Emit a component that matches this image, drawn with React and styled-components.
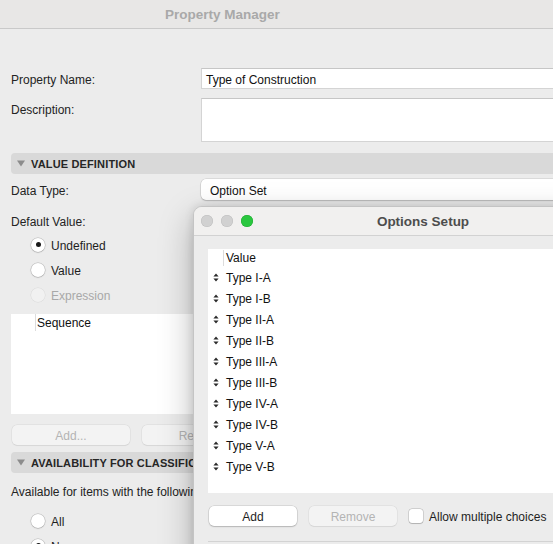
import React from 'react';
import styled, { createGlobalStyle } from 'styled-components';

const Global = createGlobalStyle`
  html, body { margin: 0; padding: 0; width: 553px; height: 544px; overflow: hidden; background: #ececec; }
  body { font-family: "Liberation Sans", Arial, sans-serif; font-size: 12px; color: #232323; }
  * { box-sizing: border-box; }
`;

const Screen = styled.div`
  position: relative;
  width: 553px;
  height: 544px;
  overflow: hidden;
`;

const MainWindow = styled.div`
  width: 640px;
  height: 100%;
  background: #ececec;
  display: flex;
  flex-direction: column;
`;

const TitleBar = styled.div`
  height: 29px;
  flex: none;
  background: #e8e7e6;
  border-bottom: 1px solid #c9c9c9;
  display: flex;
  align-items: center;
  padding-left: 165px;
  font-size: 13.5px;
  font-weight: bold;
  color: #a9a9a9;
`;

const Content = styled.div`
  padding: 39px 0 0 11px;
  display: flex;
  flex-direction: column;
`;

const FormGrid = styled.div`
  display: grid;
  grid-template-columns: 190px 1fr;
  row-gap: 9px;
  margin-top: ${p => p.$mt || 0}px;
`;

const Label = styled.div`
  height: 21px;
  padding-top: 3px;
  line-height: 18px;
  align-self: start;
  margin-top: ${p => p.$mt || 0}px;
`;

const TextField = styled.div`
  height: ${p => p.$h || 21}px;
  background: #fff;
  border: 1px solid #d4d4d4;
  border-top-color: #c6c6c6;
  padding: 3px 4px 0;
  line-height: 16px;
  color: #111;
`;

const Popup = styled.div`
  height: 21px;
  background: #fff;
  border-radius: 5px;
  box-shadow: 0 0 0 0.5px rgba(0,0,0,0.14), 0 1px 1.5px rgba(0,0,0,0.16);
  padding: 3px 0 0 9px;
  line-height: 18px;
  color: #111;
`;

const SectionHeader = styled.div`
  height: 21px;
  margin-top: ${p => p.$mt}px;
  background: #d9d9d9;
  border-radius: 4px 0 0 4px;
  display: flex;
  align-items: center;
  gap: 6px;
  padding-left: 6px;
  font-size: 11px;
  font-weight: bold;
  letter-spacing: 0.15px;
  color: #262626;
`;

const RadioGroup = styled.div`
  display: flex;
  flex-direction: column;
  padding-left: 20px;
  margin-top: ${p => p.$mt || 0}px;
`;

const RadioRow = styled.div`
  height: 25px;
  display: flex;
  align-items: center;
  gap: 6px;
  color: ${p => (p.$disabled ? '#a8a8a8' : '#1e1e1e')};
`;

const RadioText = styled.span`
  padding-top: 2px;
`;

const RadioCircle = styled.span`
  width: 14px;
  height: 14px;
  border-radius: 50%;
  background: ${p => (p.$disabled ? '#f1f1f1' : '#fff')};
  box-shadow: ${p => (p.$disabled
    ? '0 0 0 0.5px rgba(0,0,0,0.08)'
    : '0 0 0 0.5px rgba(0,0,0,0.2), 0 0.5px 1.5px rgba(0,0,0,0.2)')};
  display: flex;
  align-items: center;
  justify-content: center;
  flex: none;
  &::after {
    content: '';
    width: 5px;
    height: 5px;
    border-radius: 50%;
    background: #1a1a1a;
    display: ${p => (p.$checked ? 'block' : 'none')};
  }
`;

const PlainLine = styled.div`
  height: 21px;
  padding-top: 3px;
  line-height: 18px;
  margin-top: ${p => p.$mt || 0}px;
  white-space: nowrap;
`;

const Table = styled.div`
  background: #fff;
  height: ${p => p.$h}px;
  margin-top: ${p => p.$mt || 0}px;
  display: flex;
  flex-direction: column;
`;

const TableHeader = styled.div`
  height: ${p => p.$h}px;
  display: flex;
  align-items: center;
  padding-left: ${p => p.$sep}px;
`;

const HeaderCell = styled.div`
  border-left: 1px solid #dcdcdc;
  padding: ${p => p.$top || 0}px 0 0 ${p => p.$pad}px;
  line-height: 15px;
  color: #111;
`;

const ButtonRow = styled.div`
  display: flex;
  align-items: center;
  gap: ${p => p.$gap || 12}px;
  margin-top: ${p => p.$mt}px;
  padding-left: 1px;
`;

const Button = styled.div`
  width: ${p => p.$w}px;
  height: 20px;
  border-radius: 5px;
  flex: none;
  display: flex;
  align-items: center;
  justify-content: center;
  padding-top: 2px;
  background: ${p => (p.$disabled ? '#f3f3f3' : '#fff')};
  color: ${p => (p.$disabled ? '#b4b4b4' : '#1e1e1e')};
  box-shadow: ${p => (p.$disabled
    ? '0 0 0 0.5px rgba(0,0,0,0.07), 0 0.5px 1px rgba(0,0,0,0.06)'
    : '0 0 0 0.5px rgba(0,0,0,0.16), 0 1px 1.5px rgba(0,0,0,0.16)')};
`;

/* ---------- dialog ---------- */

const Dialog = styled.div`
  position: absolute;
  left: 193px;
  top: 206px;
  width: 453px;
  height: 380px;
  background: #ececec;
  border: 1px solid #c4c4c4;
  border-radius: 9px 9px 0 0;
  box-shadow: 0 12px 34px rgba(0,0,0,0.28), 0 0 10px rgba(0,0,0,0.12);
  display: flex;
  flex-direction: column;
`;

const DialogTitleBar = styled.div`
  height: 29px;
  flex: none;
  background: #f1f0ef;
  border-bottom: 1px solid #d2d2d2;
  border-radius: 8px 8px 0 0;
  display: grid;
  grid-template-columns: 1fr auto 1fr;
  align-items: center;
  padding-left: 7px;
`;

const Lights = styled.div`
  display: flex;
  gap: 8px;
`;

const Light = styled.span`
  width: 12px;
  height: 12px;
  border-radius: 50%;
  background: ${p => (p.$green ? '#2ac73f' : '#d1d1d1')};
  box-shadow: inset 0 0 0 0.5px ${p => (p.$green ? '#1fa830' : '#bdbdbd')};
`;

const DialogTitle = styled.div`
  font-size: 13.5px;
  font-weight: bold;
  color: #4d4d4d;
`;

const DialogBody = styled.div`
  padding: 13px 0 0 14px;
  display: flex;
  flex-direction: column;
`;

const OptionRow = styled.div`
  height: 21px;
  display: flex;
  align-items: center;
  padding-left: 5px;
  gap: 7px;
  color: #111;
`;

const OptionText = styled.span`
  padding-top: 1px;
`;

const Checkbox = styled.span`
  width: 14px;
  height: 14px;
  border-radius: 3px;
  background: #fff;
  box-shadow: 0 0 0 0.5px rgba(0,0,0,0.22), 0 0.5px 1px rgba(0,0,0,0.15);
  flex: none;
`;

const CheckLabel = styled.span`
  margin-left: -6px;
  padding-top: 2px;
  color: #1e1e1e;
  white-space: nowrap;
`;

const Divider = styled.div`
  height: 1px;
  background: #d3d3d3;
  margin-top: 15px;
`;

const Triangle = () => (
  <svg width="8" height="7" viewBox="0 0 8 7">
    <path d="M0 0.5H8L4 6.5Z" fill="#8c8c8c" />
  </svg>
);

const SortIcon = () => (
  <svg width="6" height="9" viewBox="0 0 6 9">
    <path d="M3 0.6L5.6 3.6H0.4Z M0.4 5.4H5.6L3 8.4Z" fill="#2a2a2a" />
  </svg>
);

const options = ['Type I-A', 'Type I-B', 'Type II-A', 'Type II-B', 'Type III-A', 'Type III-B', 'Type IV-A', 'Type IV-B', 'Type V-A', 'Type V-B'];

export default function App() {
  return (
    <Screen>
      <Global />
      <MainWindow>
        <TitleBar>Property Manager</TitleBar>
        <Content>
          <FormGrid>
            <Label>Property Name:</Label>
            <TextField>Type of Construction</TextField>
            <Label>Description:</Label>
            <TextField $h={44} />
          </FormGrid>

          <SectionHeader $mt={11}><Triangle />VALUE DEFINITION</SectionHeader>

          <FormGrid $mt={5}>
            <Label>Data Type:</Label>
            <Popup>Option Set</Popup>
          </FormGrid>
          <Label $mt={10}>Default Value:</Label>
          <RadioGroup $mt={1}>
            <RadioRow><RadioCircle $checked /><RadioText>Undefined</RadioText></RadioRow>
            <RadioRow><RadioCircle /><RadioText>Value</RadioText></RadioRow>
            <RadioRow $disabled><RadioCircle $disabled /><RadioText>Expression</RadioText></RadioRow>
          </RadioGroup>

          <Table $h={100} $mt={7}>
            <TableHeader $h={17} $sep={24}>
              <HeaderCell $pad={1} $top={2}>Sequence</HeaderCell>
            </TableHeader>
          </Table>

          <ButtonRow $mt={11}>
            <Button $w={118} $disabled>Add...</Button>
            <Button $w={118} $disabled>Remove</Button>
          </ButtonRow>

          <SectionHeader $mt={7}><Triangle />AVAILABILITY FOR CLASSIFICATIONS</SectionHeader>
          <PlainLine $mt={7}>Available for items with the following classifications:</PlainLine>
          <RadioGroup $mt={7}>
            <RadioRow><RadioCircle /><RadioText>All</RadioText></RadioRow>
            <RadioRow><RadioCircle $checked /><RadioText>None</RadioText></RadioRow>
          </RadioGroup>
        </Content>
      </MainWindow>

      <Dialog>
        <DialogTitleBar>
          <Lights>
            <Light />
            <Light />
            <Light $green />
          </Lights>
          <DialogTitle>Options Setup</DialogTitle>
          <span />
        </DialogTitleBar>
        <DialogBody>
          <Table $h={244}>
            <TableHeader $h={18} $sep={15}>
              <HeaderCell $pad={2} $top={1}>Value</HeaderCell>
            </TableHeader>
            {options.map(o => (
              <OptionRow key={o}><SortIcon /><OptionText>{o}</OptionText></OptionRow>
            ))}
          </Table>
          <ButtonRow $mt={13} $gap={12}>
            <Button $w={88}>Add</Button>
            <Button $w={88} $disabled>Remove</Button>
            <Checkbox />
            <CheckLabel>Allow multiple choices</CheckLabel>
          </ButtonRow>
          <Divider />
        </DialogBody>
      </Dialog>
    </Screen>
  );
}
